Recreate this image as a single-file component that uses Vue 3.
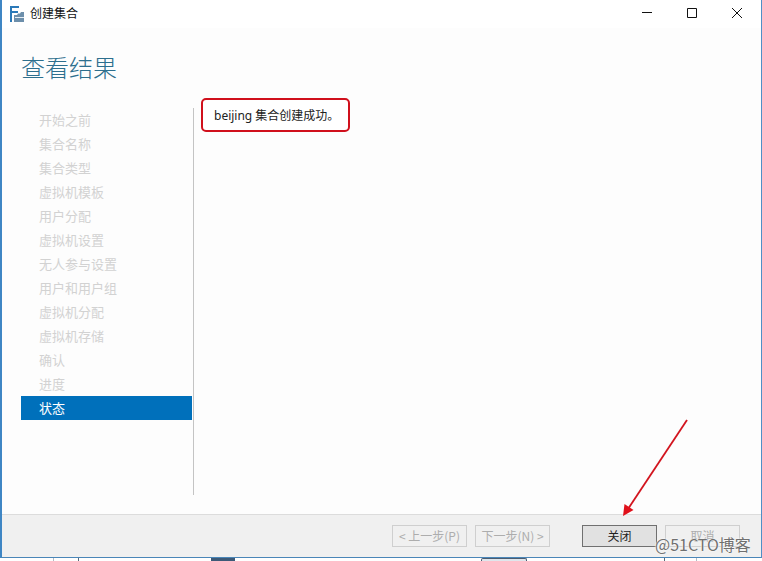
<script setup>
const steps = ['开始之前','集合名称','集合类型','虚拟机模板','用户分配','虚拟机设置','无人参与设置','用户和用户组','虚拟机分配','虚拟机存储','确认','进度','状态']
</script>

<template>
  <div class="screen">
    <div class="win">
      <header class="titlebar">
        <svg class="appicon" width="15" height="16" viewBox="0 0 15 16">
          <path d="M0 0h9v2H2v3h6v2H2v9H0z" fill="#2b79b8"/>
          <path d="M4 9h3l1-1.500h2l1-1.500h3v10H4z" fill="#6d8fab"/>
          <path d="M5 11h9v1H5z" fill="#e6edf3"/>
        </svg>
        <span class="title">创建集合</span>
        <div class="controls">
          <svg width="12" height="12" viewBox="0 0 12 12"><path d="M1 5.500h10" stroke="#111" fill="none"/></svg>
          <svg width="12" height="12" viewBox="0 0 12 12"><path d="M1.500 1.500h9v9h-9z" stroke="#111" fill="none"/></svg>
          <svg width="12" height="12" viewBox="0 0 12 12"><path d="M1 1l10 10M11 1L1 11" stroke="#111" fill="none"/></svg>
        </div>
      </header>
      <main class="body">
        <h1 class="heading">查看结果</h1>
        <div class="columns">
          <nav class="nav">
            <div v-for="(s, i) in steps" :key="s" class="step" :class="{ active: i === steps.length - 1 }">{{ s }}</div>
          </nav>
          <section class="content">
            <div class="notice">beijing 集合创建成功。</div>
          </section>
        </div>
      </main>
      <footer class="footer">
        <button class="btn off">&lt; 上一步(P)</button>
        <button class="btn off next">下一步(N) &gt;</button>
        <button class="btn primary">关闭</button>
        <button class="btn off">取消</button>
      </footer>
    </div>
    <div class="strip">
      <i class="tick t1"></i>
      <i class="tick t2"></i>
      <i class="chip c1"></i>
      <i class="chip c2"></i>
      <i class="tick t3"></i>
      <i class="tick t4"></i>
    </div>
    <svg class="arrow" width="90" height="110" viewBox="0 0 90 110">
      <path d="M65 1L6 90" stroke="#d2141e" stroke-width="1.800" fill="none"/>
      <path d="M1 97L2.500 85l9 6z" fill="#e0101a"/>
    </svg>
    <span class="mark">@51CTO博客</span>
  </div>
</template>

<style>
html, body { margin: 0; background: #fff; }
</style>

<style scoped>
.screen {
  position: relative;
  width: 762px;
  height: 561px;
  overflow: hidden;
  display: flex;
  flex-direction: column;
  font-family: "Noto Sans CJK SC", "Liberation Sans", sans-serif;
  background: #fff;
}
.win {
  height: 558px;
  flex: none;
  box-sizing: border-box;
  display: flex;
  flex-direction: column;
  border-left: 2px solid #3f86c4;
  border-right: 1px solid #4f8fc6;
  border-bottom: 1px solid #4a86b8;
}
.titlebar {
  height: 28px;
  flex: none;
  background: #fff;
  display: flex;
  align-items: center;
  padding-left: 8px;
}
.appicon { margin-right: 5px; margin-top: -1px; }
.title { font-size: 12px; color: #111; margin-top: -3px; }
.controls {
  margin-left: auto;
  margin-right: 18px;
  display: flex;
  gap: 33px;
  align-items: center;
  margin-top: -2px;
}
.body {
  flex: 1;
  min-height: 0;
  background: #fdfdfd;
  padding: 0 0 0 19px;
  display: flex;
  flex-direction: column;
}
.heading {
  margin: 17px 0 1px 0;
  height: 62px;
  font-size: 24px;
  line-height: 44px;
  font-weight: 300;
  color: #2d6f8e;
  flex: none;
}
.columns { display: flex; flex: 1; min-height: 0; }
.nav {
  width: 171px;
  flex: none;
  display: flex;
  flex-direction: column;
}
.step {
  height: 24px;
  line-height: 24px;
  padding-left: 18px;
  font-size: 13px;
  color: #d2d2d2;
  flex: none;
}
.step.active { background: #0070bb; color: #fff; }
.content {
  position: relative;
  flex: 1;
  margin-left: 1px;
  margin-bottom: 19px;
  border-left: 1px solid #c4c4c4;
}
.notice {
  position: absolute;
  top: -10px;
  left: 7px;
  width: 149px;
  height: 34px;
  box-sizing: border-box;
  border: 2px solid #d0101c;
  border-radius: 5px;
  background: #fff;
  font-size: 12px;
  line-height: 31px;
  padding-left: 11px;
  color: #222;
  white-space: nowrap;
  font-family: "Noto Sans", "Noto Sans CJK SC", sans-serif;
}
.footer {
  height: 43px;
  box-sizing: border-box;
  flex: none;
  background: #f0f0f0;
  border-top: 1px solid #dcdcdc;
  display: flex;
  align-items: center;
  padding: 0 20px 0 390px;
}
.btn {
  width: 75px;
  height: 22px;
  box-sizing: border-box;
  padding: 0;
  font: inherit;
  font-size: 12px;
  line-height: 18px;
  border: 1px solid #adadad;
  background: #f0f0f0;
  color: #222;
}
.btn.off { border-color: #cfcfcf; color: #adadad; }
.next { margin-left: 8px; }
.primary {
  margin-left: 32px;
  background: #e1e1e1;
  border-color: #707070;
}
.primary + .btn { margin-left: 8px; }
.strip { flex: 1; background: #fff; position: relative; }
.chip { position: absolute; top: 0; height: 3px; background: #3d5a78; }
.c1 { left: 211px; width: 24px; }
.c2 {
  left: 481px;
  width: 46px;
  box-sizing: border-box;
  background: #dfe6ec;
  border: 1px solid #4a5c70;
  border-bottom: 0;
  border-radius: 2px 2px 0 0;
}
.tick { position: absolute; top: 0; width: 1px; height: 3px; background: #5a6a7a; }
.t1 { left: 53px; background: #b5bcc4; }
.t2 { left: 78px; }
.t3 { left: 664px; }
.t4 { left: 696px; background: #b5bcc4; }
.arrow { position: absolute; left: 622px; top: 419px; }
.mark {
  position: absolute;
  left: 655px;
  top: 533px;
  font-size: 16px;
  line-height: 22px;
  color: #707070;
  text-shadow: 0 0 1px #fff, 0 0 2px #fff;
  white-space: nowrap;
}
</style>
